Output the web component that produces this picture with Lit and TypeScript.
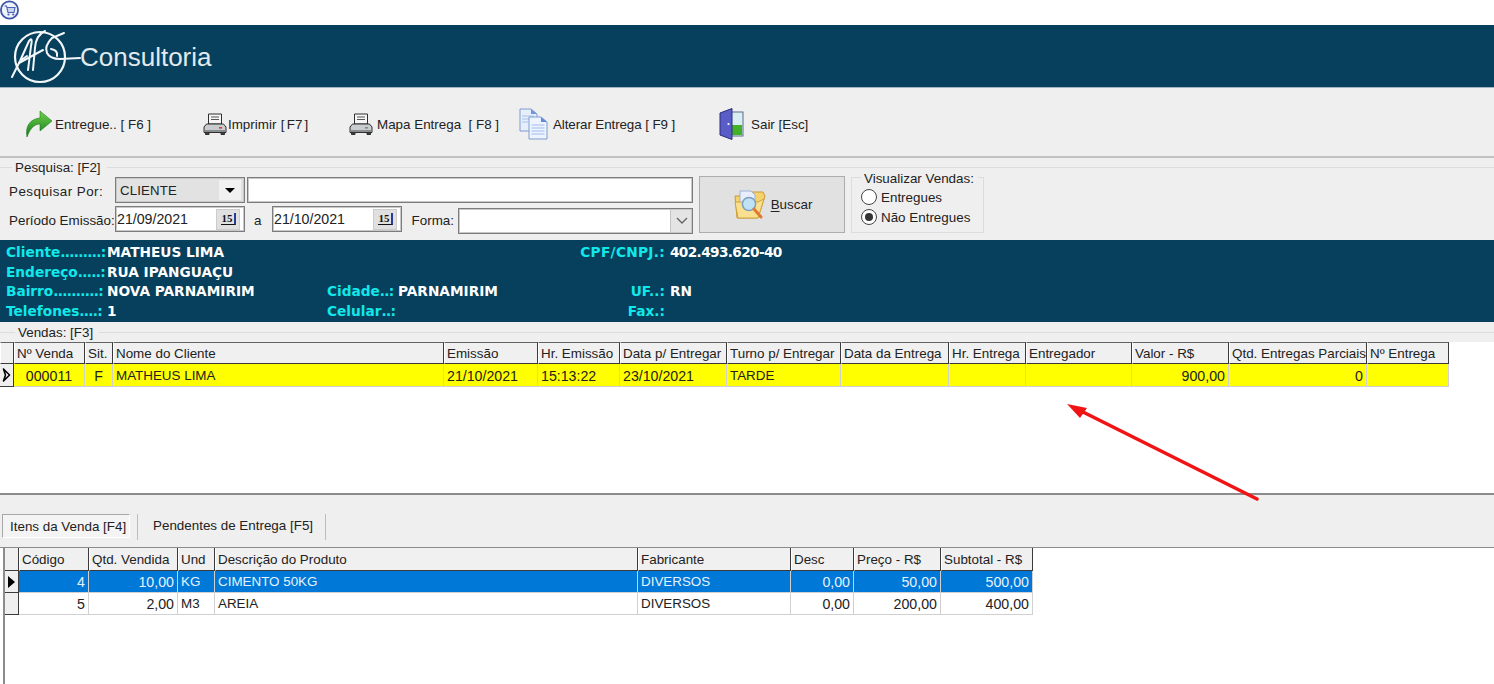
import { LitElement, html, css, svg } from "lit";
import { customElement } from "lit/decorators.js";

const logo = html`<svg class="logo" viewBox="0 0 82 62" width="82" height="62" fill="none" stroke="#f4f7f9" stroke-linecap="round" stroke-linejoin="round">
  <circle cx="40" cy="32" r="25" stroke-width="2.2"/>
  <path stroke-width="2" d="M12 52 L20 36 L29 16 Q33 11 31 21 L28 45 M20 36 L27 31"/>
  <path stroke-width="2" d="M45 6 Q36 10 35 23 L33 45 M19 38 L43 25"/>
  <path stroke-width="2" d="M64 8 L52 13 Q44 21 47 28 Q50 34 60 34 L80 33 M51 24 Q58 25 57 31"/>
</svg>`;

const cart = html`<svg viewBox="0 0 20 20" width="20" height="20" class="cart">
  <circle cx="9.5" cy="10" r="8.6" fill="#eef2fb" stroke="#3d55a8" stroke-width="1.8"/>
  <path d="M4.5 6 H6.5 L8 12.5 H14 L15 7.5 H7" fill="#c9d4f0" stroke="#4a62b5" stroke-width="1.1"/>
  <circle cx="8.5" cy="14.5" r="1.1" fill="#4a62b5"/><circle cx="13.2" cy="14.5" r="1.1" fill="#4a62b5"/>
</svg>`;

const arrow = html`<svg viewBox="0 0 27 28" width="27" height="28">
  <defs><linearGradient id="g1" x1="0" y1="0" x2="0" y2="1"><stop offset="0" stop-color="#6fd04a"/><stop offset="1" stop-color="#167d1c"/></linearGradient></defs>
  <path d="M1 27 C-1 16 4 9 14 8 L14 1 L26 11 L14 21 L14 14 C8 14 4 19 1 27Z" fill="url(#g1)" stroke="#1c7a20" stroke-width=".6"/>
</svg>`;

const printer = (led: string) => html`<svg viewBox="0 0 24 22" width="24" height="22">
  <path d="M5.5 1 H18.5 V11 H5.5Z" fill="#f6f6f6" stroke="#2e2e2e"/>
  <path d="M8 4 H16 M8 6.5 H16" stroke="#555" stroke-width="1"/>
  <path d="M3.5 11 H20.5 L23 14 V19.5 H1 V14Z" fill="#c9ccce" stroke="#2e2e2e"/>
  <path d="M2 18 H22" stroke="#6d7174" stroke-width="1.4"/>
  <rect x="16" y="14" width="3" height="1.6" fill="${led}"/>
  <path d="M2.5 20 V21.5 H6 V20 M18 20 V21.5 H21.5 V20" fill="#444" stroke="#2e2e2e"/>
</svg>`;

const docs = html`<svg viewBox="0 0 29 32" width="29" height="32">
  <path d="M1 1 H12 L18 6 V23 H1Z" fill="#e6eefb" stroke="#7d9cd0"/>
  <path d="M12 1 V6 H18Z" fill="#6f97d8"/>
  <path d="M3 8 H15 M3 11 H15 M3 14 H9" stroke="#a9c2ea"/>
  <path d="M10 9 H22 L28 14 V31 H10Z" fill="#eef4ff" stroke="#7d9cd0"/>
  <path d="M22 9 V14 H28Z" fill="#5f8bd6"/>
  <path d="M12.5 17 H25.5 M12.5 20 H25.5 M12.5 23 H25.5 M12.5 26 H25.5" stroke="#9dbbe8"/>
</svg>`;

const door = html`<svg viewBox="0 0 25 32" width="25" height="32">
  <rect x="12" y="4" width="12" height="24" fill="#d9eef2" stroke="#5a6f85"/>
  <rect x="13" y="17" width="10" height="10" fill="#43b02a"/>
  <path d="M1 5 L13 0.5 V31.5 L1 27Z" fill="#5a5cc8" stroke="#2b2d7a"/>
  <circle cx="9.5" cy="16" r="1.1" fill="#fff"/>
</svg>`;

const search = html`<svg viewBox="0 0 32 30" width="32" height="30">
  <path d="M1 6 H11 L14 2 H29 L31 6 L24 28 H3Z" fill="#f4d36f" stroke="#c99b35"/>
  <path d="M6 1 H17 L21 5 V19 H6Z" fill="#e8eefb" stroke="#9cb1d8"/>
  <path d="M1 12 H24 L30 9 L24 28 H4Z" fill="#f8e08e" stroke="#cfa23f"/>
  <circle cx="15" cy="14" r="6.6" fill="#bfe2f5" stroke="#7f9dbc" stroke-width="1.5"/>
  <path d="M20 19 L27 27" stroke="#e2792f" stroke-width="3" stroke-linecap="round"/>
</svg>`;

const vendasHead = ["", "Nº Venda", "Sit.", "Nome do Cliente", "Emissão", "Hr. Emissão", "Data p/ Entregar", "Turno p/ Entregar", "Data da Entrega", "Hr. Entrega", "Entregador", "Valor - R$", "Qtd. Entregas Parciais", "Nº Entrega"];
const vendasRow: [string, string][] = [["000011", "c"], ["F", "c"], ["MATHEUS LIMA", ""], ["21/10/2021", "n"], ["15:13:22", "n"], ["23/10/2021", "n"], ["TARDE", ""], ["", ""], ["", ""], ["", ""], ["900,00", "r"], ["0", "r"], ["", ""]];
const itensHead = ["", "Código", "Qtd. Vendida", "Und", "Descrição do Produto", "Fabricante", "Desc", "Preço - R$", "Subtotal - R$"];
const itens: [string, string][][] = [
  [["4", "r"], ["10,00", "r"], ["KG", ""], ["CIMENTO 50KG", ""], ["DIVERSOS", ""], ["0,00", "r"], ["50,00", "r"], ["500,00", "r"]],
  [["5", "r"], ["2,00", "r"], ["M3", ""], ["AREIA", ""], ["DIVERSOS", ""], ["0,00", "r"], ["200,00", "r"], ["400,00", "r"]],
];
const cellAlign = (a: string) => (a === "c" ? "tc n" : a === "r" ? "tr" : a === "n" ? "n" : "");
const dots = (label: string, n: string, end: string) => html`${label}<span class="d">${n}</span>${end}`;

@customElement("app-root")
export class AppRoot extends LitElement {
  static styles = css`
    :host { display: block; position: relative; width: 1494px; height: 684px; overflow: hidden; background: #fff;
      font-family: "Liberation Sans", Arial, sans-serif; font-size: 13.4px; color: #222; }
    * { box-sizing: border-box; }
    .title { height: 25px; background: #fff; }
    .cart { display: block; }
    .brand { height: 63px; background: #06405c; border-bottom: 1px solid #9fb4bf; display: flex; align-items: flex-start; }
    .brand-name { color: #e2eaee; font-size: 26px; line-height: 64px; margin-left: -2px; }
    .toolbar { height: 70px; background: #efefef; border-bottom: 2px solid #c2c2c2; padding: 4px 0 0 26px;
      display: grid; grid-template-columns: 177px 146px 170px 200px auto; align-items: center; }
    .tool { display: flex; align-items: center; white-space: pre; }
    .tool svg { display: block; flex: none; }
    .t1 { gap: 2px; } .t2 { gap: 1px; word-spacing: -1.5px; } .t3 { gap: 4px; } .t4 { gap: 5px; letter-spacing: -.1px; } .t5 { gap: 7px; }
    .panel { background: #efefef; }
    .search { height: 82px; }
    .legend { display: flex; align-items: center; height: 19px; white-space: nowrap; }
    .search > .legend { height: 18px; margin-bottom: 1px; }
    .legend::before { content: ""; width: var(--lead, 12px); height: 1px; background: #dcdcdc; margin-right: 3px; flex: none; }
    .legend::after { content: ""; flex: 1; height: 1px; background: #dcdcdc; margin-left: 6px; }
    .form { display: flex; padding-left: 9px; }
    .fields { display: grid; grid-template-columns: 106px 130px 27px 130px minmax(0, 1fr); grid-auto-rows: 29px; width: 684px; }
    .lbl { display: flex; align-items: center; white-space: nowrap; }
    .ls { letter-spacing: .45px; }
    .sunken { height: 26px; background: #fff; border: 1px solid #7c7c7c; outline: 1px solid #c8c8c8; outline-offset: -2px; display: flex; align-items: center; padding-left: 1px; }
    .date { font-size: 14.2px; }
    .combo { background: #e2e2e2; padding-left: 4px; justify-content: space-between; padding-right: 3px; font-size: 13.2px; letter-spacing: .2px; }
    .dd { width: 22px; height: 20px; background: #f1f1f1; display: flex; align-items: center; justify-content: center; }
    .tri { width: 0; height: 0; border-left: 5px solid transparent; border-right: 5px solid transparent; border-top: 5px solid #000; }
    .cal { width: 24px; height: 21px; margin-left: auto; margin-right: 4px; background: #e0e0e0; border: 1px solid #ccc; display: flex; align-items: center; justify-content: center; }
    .cal span { font: bold 11px/11px "Liberation Serif", serif; color: #111; border-bottom: 1px solid #111; border-right: 2px solid #2a3a96; padding: 0 1px; }
    .wide { grid-column: 3 / span 3; margin-left: 2px; }
    .a { display: flex; align-items: center; padding-left: 9px; }
    .forma { display: flex; align-items: center; justify-content: flex-end; gap: 4px; min-width: 0; white-space: nowrap; }
    .forma .sunken { width: 235px; flex: none; padding: 0; justify-content: flex-end; }
    .ddf { width: 22px; height: 24px; background: #e4e4e4; border-left: 1px solid #c4c4c4; display: flex; align-items: center; justify-content: center; }
    .buscar { width: 146px; height: 57px; margin: -1px 0 0 6px; background: #e1e1e1; border: 1px solid #adadad; display: flex; align-items: center; justify-content: center; gap: 5px; font: inherit; color: inherit; padding: 0 0 0 2px; }
    .buscar u { text-underline-offset: 2px; }
    .vis { width: 133px; height: 56px; margin: 0 0 0 6px; border: 1px solid #dcdcdc; padding: 0 0 0 9px; }
    .vis-title { background: #efefef; margin: -8px 0 0 0; padding: 0 4px 0 3px; width: max-content; height: 17px; line-height: 17px; }
    .radio { display: flex; align-items: center; gap: 4px; height: 20px; }
    .dot { width: 16px; height: 16px; border-radius: 50%; border: 1.5px solid #444; background: #fff; display: flex; align-items: center; justify-content: center; }
    .dot i { width: 8px; height: 8px; border-radius: 50%; background: #333; }
    .info { height: 82px; background: #06405c; padding: 2px 0 0 6px; display: grid;
      grid-template-columns: 101px 220px 71px 182px 90px auto; grid-auto-rows: 19.7px; align-items: center;
      font-family: "DejaVu Sans", Verdana, sans-serif; font-weight: bold; font-size: 13.7px; color: #fff; white-space: nowrap; }
    .k { color: #12e8ea; }
    .d { letter-spacing: -.7px; }
    .kr { text-align: right; padding-right: 5px; }
    .wider { letter-spacing: .3px; }
    .tight { letter-spacing: -.65px; }
    .vendas-label { height: 20px; --lead: 15px; }
    .grid-zone { background: #fff; }
    .zone1 { height: 153px; border-bottom: 2px solid #8c8c8c; }
    .g { display: grid; width: max-content; }
    .g1 { grid-template-columns: 14px 71px 28px 331px 94px 82px 107px 114px 108px 77px 106px 97px 138px 82px; }
    .g2 { grid-template-columns: 15px 70px 89px 37px 423px 153px 63px 87px 92px; margin-left: 1px; }
    .h { background: #f0f0f0; border-top: 1px solid #646464; border-bottom: 1px solid #3a3a3a; border-right: 1px solid #3a3a3a; border-left: 1px solid #fff; height: 22px; line-height: 21px; padding-left: 2px; white-space: nowrap; overflow: hidden; }
    .c { height: 23px; line-height: 24px; padding: 0 3px; white-space: nowrap; overflow: hidden; border-right: 1px solid #d0d0d0; border-bottom: 1px solid #d0d0d0; }
    .n, .tr { font-size: 14.2px; }
    .y { background: #ffff00; }
    .sel { background: #0078d7; color: #e6f2fb; }
    .w { background: #fff; }
    .tc { text-align: center; }
    .tr { text-align: right; }
    .ind { padding: 0; background: #efefef; border-right: 1px solid #3a3a3a; border-bottom: 1px solid #3a3a3a; display: flex; align-items: center; justify-content: center; }
    .ptr { width: 0; height: 0; border-top: 6px solid transparent; border-bottom: 6px solid transparent; border-left: 7px solid #000; }
    .ptr2 { width: 9px; height: 14px; }
    .tabs-zone { height: 52px; padding: 19px 0 0 2px; display: flex; align-items: flex-start; }
    .tab { height: 24px; line-height: 24px; white-space: nowrap; }
    .tab.on { width: 128px; padding-left: 7px; border: 1px solid #a8a8a8; border-right-color: #fff; border-bottom-color: #fff; background: #f4f4f4; }
    .sep { width: 1px; height: 26px; background: #bdbdbd; margin: 0 15px 0 7px; }
    .sep2 { margin: 0 0 0 12px; }
    .zone2 { height: 137px; padding-left: 3px; border-top: 1px solid #8c8c8c; position: relative; }
    .zone2::before { content: ""; position: absolute; left: 3px; top: 0; bottom: 0; width: 2px; background: #8c8c8c; }
    .g2 .h { border-top: none; height: 23px; line-height: 23px; }
    .g2 .c { height: 22px; line-height: 22px; }
    .red { position: absolute; left: 1050px; top: 395px; pointer-events: none; }
  `;

  render() {
    return html`
      <div class="title">${cart}</div>
      <div class="brand">${logo}<span class="brand-name">Consultoria</span></div>
      <div class="toolbar">
        <div class="tool t1">${arrow}<span>Entregue.. [ F6 ]</span></div>
        <div class="tool t2">${printer("#e33")}<span>Imprimir  [ F7 ]</span></div>
        <div class="tool t3">${printer("#888")}<span>Mapa Entrega  [ F8 ]</span></div>
        <div class="tool t4">${docs}<span>Alterar Entrega [ F9 ]</span></div>
        <div class="tool t5">${door}<span>Sair [Esc]</span></div>
      </div>
      <div class="panel search">
        <div class="legend">Pesquisa: [F2]</div>
        <div class="form">
          <div class="fields">
            <div class="lbl ls">Pesquisar Por:</div>
            <div class="sunken combo"><span>CLIENTE</span><span class="dd"><span class="tri"></span></span></div>
            <div class="sunken wide"></div>
            <div class="lbl">Período Emissão:</div>
            <div class="sunken date"><span>21/09/2021</span><span class="cal"><span>15</span></span></div>
            <div class="a">a</div>
            <div class="sunken date"><span>21/10/2021</span><span class="cal"><span>15</span></span></div>
            <div class="forma"><span>Forma:</span><div class="sunken"><span class="ddf">
              <svg width="12" height="8" viewBox="0 0 12 8" fill="none" stroke="#666" stroke-width="1.4"><path d="M1 1 L6 6 L11 1"/></svg>
            </span></div></div>
          </div>
          <button class="buscar">${search}<span><u>B</u>uscar</span></button>
          <div class="vis">
            <div class="vis-title">Visualizar Vendas:</div>
            <div class="radio"><span class="dot"></span>Entregues</div>
            <div class="radio"><span class="dot"><i></i></span>Não Entregues</div>
          </div>
        </div>
      </div>
      <div class="info">
        <span class="k">${dots("Cliente", ".........", ":")}</span><span>MATHEUS LIMA</span><span></span><span></span><span class="k kr wider">CPF/CNPJ.:</span><span class="tight">402.493.620-40</span>
        <span class="k">${dots("Endereço", ".....", ":")}</span><span>RUA IPANGUAÇU</span><span></span><span></span><span></span><span></span>
        <span class="k">${dots("Bairro", "..........", ":")}</span><span>NOVA PARNAMIRIM</span><span class="k">${dots("Cidade", "..", ":")}</span><span>PARNAMIRIM</span><span class="k kr">UF..:</span><span>RN</span>
        <span class="k">${dots("Telefones", "....", ":")}</span><span>1</span><span class="k">${dots("Celular", "..", ":")}</span><span></span><span class="k kr">Fax.:</span><span></span>
      </div>
      <div class="panel legend vendas-label">Vendas: [F3]</div>
      <div class="grid-zone zone1">
        <div class="g g1">
          ${vendasHead.map((t) => html`<div class="h">${t}</div>`)}
          <div class="c ind">
            <svg class="ptr2" viewBox="0 0 9 14"><path d="M1.5 1 L7.5 7 L1.5 13 L3.5 7Z" fill="#fff" stroke="#000" stroke-width="1.6" stroke-linejoin="round"/></svg>
          </div>
          ${vendasRow.map(([t, a]) => html`<div class="c y ${cellAlign(a)}">${t}</div>`)}
        </div>
      </div>
      <div class="panel tabs-zone">
        <div class="tab on">Itens da Venda [F4]</div>
        <div class="sep"></div>
        <div class="tab">Pendentes de Entrega [F5]</div>
        <div class="sep sep2"></div>
      </div>
      <div class="grid-zone zone2">
        <div class="g g2">
          ${itensHead.map((t) => html`<div class="h">${t}</div>`)}
          ${itens.map((row, i) => html`
            <div class="c ind">${i === 0 ? html`<span class="ptr"></span>` : ""}</div>
            ${row.map(([t, a]) => html`<div class="c ${i === 0 ? "sel" : "w"} ${cellAlign(a)}">${t}</div>`)}
          `)}
        </div>
      </div>
      <svg class="red" width="220" height="115" viewBox="1050 395 220 115">
        ${svg`<path d="M1257 499 L1082 411.5" stroke="#f01414" stroke-width="3.6" stroke-linecap="round"/>
        <path d="M1067 404 L1087 408 L1080 418Z" fill="#f01414"/>`}
      </svg>
    `;
  }
}
